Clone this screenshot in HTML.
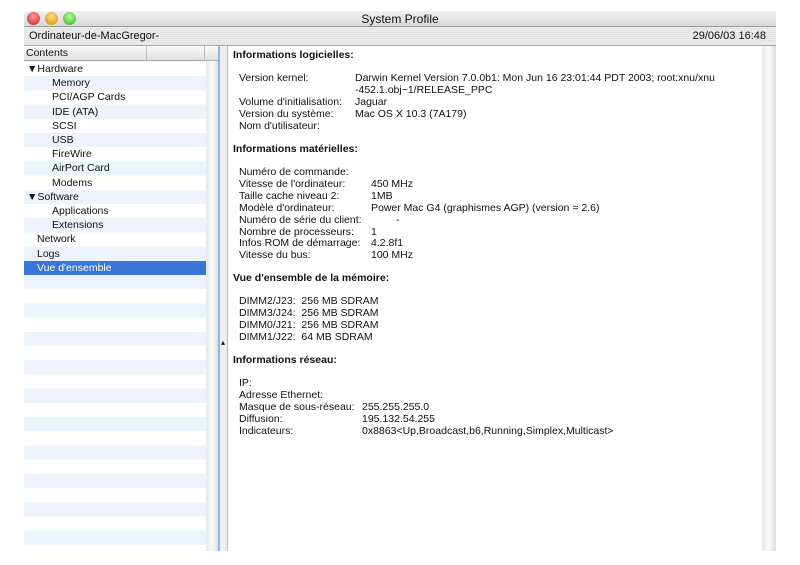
<!DOCTYPE html><html><head><meta charset="utf-8"><style>
*{margin:0;padding:0;box-sizing:border-box}
body{width:800px;height:565px;background:#fff;position:relative;overflow:hidden;font-family:"Liberation Sans",sans-serif;font-size:10.5px;color:#111}
.a{position:absolute}
.title{left:24px;top:11px;width:752px;height:16px;background:linear-gradient(#f0f0f0,#d8d8d8);border-bottom:1px solid #999;text-align:center;font-size:12px;line-height:16px}
.bar{left:24px;top:27px;width:752px;height:19px;background:repeating-linear-gradient(#ececec 0 1px,#e2e2e2 1px 2px);border-bottom:1px solid #aaa;font-size:11px;line-height:19px}
.dot{width:13px;height:13px;border-radius:50%;top:12px}
.list{left:24px;top:46px;width:182px;height:505px;background:repeating-linear-gradient(#fff 0 14.2px,#edf3fd 14.2px 28.4px);background-position:0 16px}
.hdr{left:24px;top:46px;width:194px;height:15px;background:linear-gradient(#fafafa,#e0e0e0);border-bottom:1px solid #aaa;font-size:10.5px;line-height:15px;padding-left:2px}
.row{position:absolute;left:0;height:14.2px;line-height:15.5px;width:182px}
.sel{background:#3875d7;color:#fff}
.sc{background:linear-gradient(90deg,#e6e6e6,#fafafa,#dedede)}
.r div{position:absolute;white-space:nowrap}
b{font-weight:bold}
</style></head><body>
<div class="a title">System Profile</div>
<div class="a dot" style="left:27px;background:radial-gradient(circle at 50% 35%,#f99,#c22)"></div>
<div class="a dot" style="left:45px;background:radial-gradient(circle at 50% 35%,#fd8,#d80)"></div>
<div class="a dot" style="left:63px;background:radial-gradient(circle at 50% 35%,#bf9,#3a2)"></div>
<div class="a bar"><span style="padding-left:5px">Ordinateur-de-MacGregor-</span><span style="position:absolute;right:10px">29/06/03 16:48</span></div>
<div class="a list">
<div class="row" style="top:16px;padding-left:3px">▼Hardware</div>
<div class="row" style="top:30.2px;padding-left:28px">Memory</div>
<div class="row" style="top:44.4px;padding-left:28px">PCI/AGP Cards</div>
<div class="row" style="top:58.6px;padding-left:28px">IDE (ATA)</div>
<div class="row" style="top:72.8px;padding-left:28px">SCSI</div>
<div class="row" style="top:87px;padding-left:28px">USB</div>
<div class="row" style="top:101.2px;padding-left:28px">FireWire</div>
<div class="row" style="top:115.4px;padding-left:28px">AirPort Card</div>
<div class="row" style="top:129.6px;padding-left:28px">Modems</div>
<div class="row" style="top:143.8px;padding-left:3px">▼Software</div>
<div class="row" style="top:158px;padding-left:28px">Applications</div>
<div class="row" style="top:172.2px;padding-left:28px">Extensions</div>
<div class="row" style="top:186.4px;padding-left:13px">Network</div>
<div class="row" style="top:200.6px;padding-left:13px">Logs</div>
<div class="row sel" style="top:214.8px;padding-left:13px">Vue d'ensemble</div>
</div>
<div class="a hdr">Contents</div>
<div class="a" style="left:146px;top:46px;width:1px;height:15px;background:#bbb"></div>
<div class="a" style="left:204px;top:46px;width:1px;height:15px;background:#bbb"></div>
<div class="a sc" style="left:206px;top:61px;width:12px;height:490px"></div>
<div class="a" style="left:218px;top:46px;width:2px;height:505px;background:#8fb4e6"></div>
<div class="a" style="left:220px;top:46px;width:8px;height:505px;background:#eee;border-right:1px solid #bbb"></div>
<div class="a" style="left:221px;top:338px;font-size:8px">▴</div>
<div class="a sc" style="left:762px;top:46px;width:14px;height:505px"></div>
<div class="a r" style="left:233px;top:47px">
<div style="top:2px"><b>Informations logicielles:</b></div>
<div style="top:25px;left:6px">Version kernel:</div><div style="top:25px;left:122px">Darwin Kernel Version 7.0.0b1: Mon Jun 16 23:01:44 PDT 2003; root:xnu/xnu</div>
<div style="top:37px;left:122px">-452.1.obj~1/RELEASE_PPC</div>
<div style="top:49px;left:6px">Volume d'initialisation:</div><div style="top:49px;left:122px">Jaguar</div>
<div style="top:61px;left:6px">Version du système:</div><div style="top:61px;left:122px">Mac OS X 10.3 (7A179)</div>
<div style="top:73px;left:6px">Nom d'utilisateur:</div>
<div style="top:96px"><b>Informations matérielles:</b></div>
<div style="top:119px;left:6px">Numéro de commande:</div>
<div style="top:131px;left:6px">Vitesse de l'ordinateur:</div><div style="top:131px;left:138px">450 MHz</div>
<div style="top:143px;left:6px">Taille cache niveau 2:</div><div style="top:143px;left:138px">1MB</div>
<div style="top:155px;left:6px">Modèle d'ordinateur:</div><div style="top:155px;left:138px">Power Mac G4 (graphismes AGP) (version = 2.6)</div>
<div style="top:167px;left:6px">Numéro de série du client:</div><div style="top:167px;left:163px">-</div>
<div style="top:179px;left:6px">Nombre de processeurs:</div><div style="top:179px;left:138px">1</div>
<div style="top:190px;left:6px">Infos ROM de démarrage:</div><div style="top:190px;left:138px">4.2.8f1</div>
<div style="top:202px;left:6px">Vitesse du bus:</div><div style="top:202px;left:138px">100 MHz</div>
<div style="top:225px"><b>Vue d'ensemble de la mémoire:</b></div>
<div style="top:248px;left:6px">DIMM2/J23:&nbsp; 256 MB SDRAM</div>
<div style="top:260px;left:6px">DIMM3/J24:&nbsp; 256 MB SDRAM</div>
<div style="top:272px;left:6px">DIMM0/J21:&nbsp; 256 MB SDRAM</div>
<div style="top:284px;left:6px">DIMM1/J22:&nbsp; 64 MB SDRAM</div>
<div style="top:307px"><b>Informations réseau:</b></div>
<div style="top:330px;left:6px">IP:</div>
<div style="top:342px;left:6px">Adresse Ethernet:</div>
<div style="top:354px;left:6px">Masque de sous-réseau:</div><div style="top:354px;left:129px">255.255.255.0</div>
<div style="top:366px;left:6px">Diffusion:</div><div style="top:366px;left:129px">195.132.54.255</div>
<div style="top:378px;left:6px">Indicateurs:</div><div style="top:378px;left:129px">0x8863&lt;Up,Broadcast,b6,Running,Simplex,Multicast&gt;</div>
</div>
</body></html>
